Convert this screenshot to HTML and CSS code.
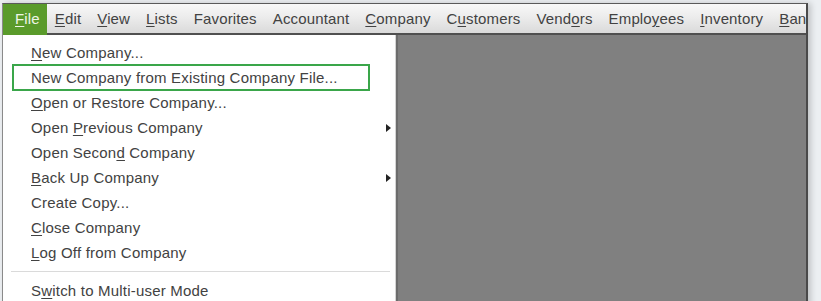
FILE: index.html
```html
<!DOCTYPE html>
<html>
<head>
<meta charset="utf-8">
<link rel="stylesheet" href="styles.css">
</head>
<body>
<div class="window">
  <div class="menubar">
    <span class="mi active"><u>F</u>ile</span>
    <span class="mi"><u>E</u>dit</span>
    <span class="mi"><u>V</u>iew</span>
    <span class="mi"><u>L</u>ists</span>
    <span class="mi">Favorites</span>
    <span class="mi">Accountant</span>
    <span class="mi"><u>C</u>ompany</span>
    <span class="mi">C<u>u</u>stomers</span>
    <span class="mi">Vend<u>o</u>rs</span>
    <span class="mi">Emplo<u>y</u>ees</span>
    <span class="mi"><u>I</u>nventory</span>
    <span class="mi"><u>B</u>anking</span>
  </div>
  <div class="body">
    <div class="dropdown">
      <div class="item"><u>N</u>ew Company...</div>
      <div class="item boxed">New Company from Existing Company File...</div>
      <div class="item"><u>O</u>pen or Restore Company...</div>
      <div class="item sub">Open <u>P</u>revious Company<span class="arrow"></span></div>
      <div class="item">Open Secon<u>d</u> Company</div>
      <div class="item sub"><u>B</u>ack Up Company<span class="arrow"></span></div>
      <div class="item">Create Copy...</div>
      <div class="item"><u>C</u>lose Company</div>
      <div class="item"><u>L</u>og Off from Company</div>
      <div class="sep"></div>
      <div class="item">S<u>w</u>itch to Multi-user Mode</div>
    </div>
    <div class="desktop"></div>
  </div>
</div>
</body>
</html>
```
FILE: styles.css
```css
html, body {
  margin: 0;
  padding: 0;
  height: 100%;
  overflow: hidden;
}
body {
  background: #eceff2;
  font-family: "Liberation Sans", Arial, sans-serif;
  font-size: 15px;
}
.window {
  margin: 3px 0 0 2px;
  width: 803px;
  height: 320px;
  border-top: 1px solid #5a5a5a;
  border-left: 1px solid #8a8a8a;
  border-right: 2px solid #4a4a4a;
  box-shadow: 3px 0 6px rgba(0,0,0,0.18);
  display: flex;
  flex-direction: column;
  overflow: hidden;
}
.menubar {
  height: 29px;
  line-height: 29px;
  border-bottom: 2px solid #505050;
  background: linear-gradient(#f8f8f8, #ececec 45%, #dadada);
  display: flex;
  white-space: nowrap;
  color: #424242;
  letter-spacing: 0.15px;
}
.mi {
  padding: 0 8px;
  flex: none;
}
.mi u {
  text-underline-offset: 2px;
}
.mi.active {
  background: #5a9b2b;
  color: #eef5e6;
  padding: 0 7px 0 12px;
  height: 31px;
}
.body {
  flex: 1;
  display: flex;
  min-height: 0;
}
.dropdown {
  width: 392px;
  flex: none;
  background: #fff;
  border-right: 1px solid #d4d4d4;
  padding-top: 5px;
  color: #424242;
  letter-spacing: 0.2px;
}
.item {
  position: relative;
  height: 25px;
  line-height: 25px;
  padding-left: 28px;
  white-space: nowrap;
}
.item u {
  text-underline-offset: 2px;
}
.item.boxed::after {
  content: "";
  position: absolute;
  left: 9px;
  width: 358px;
  top: -1px;
  bottom: -1px;
  border: 2px solid #3aa64a;
  box-sizing: border-box;
}
.arrow {
  position: absolute;
  left: 383px;
  top: 9px;
  width: 0;
  height: 0;
  border-top: 4px solid transparent;
  border-bottom: 4px solid transparent;
  border-left: 5px solid #222;
}
.sep {
  height: 1px;
  margin: 6px 5px 6px 8px;
  background: #dadada;
}
.desktop {
  flex: 1;
  background: #808080;
  border-left: 2px solid #6c6c6c;
}
```
